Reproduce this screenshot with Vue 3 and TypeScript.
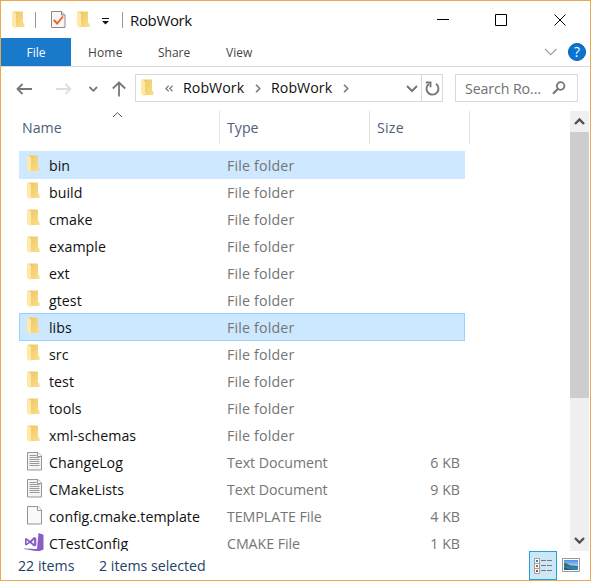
<script setup lang="ts">
type Kind = 'folder' | 'text' | 'blank' | 'vs'
interface Entry {
  name: string
  type: string
  size?: string
  kind: Kind
  state?: 'selected' | 'focused'
}

const folder = (name: string, state?: Entry['state']): Entry => ({ name, type: 'File folder', kind: 'folder', state })

const entries: Entry[] = [
  folder('bin', 'selected'),
  folder('build'),
  folder('cmake'),
  folder('example'),
  folder('ext'),
  folder('gtest'),
  folder('libs', 'focused'),
  folder('src'),
  folder('test'),
  folder('tools'),
  folder('xml-schemas'),
  { name: 'ChangeLog', type: 'Text Document', size: '6 KB', kind: 'text' },
  { name: 'CMakeLists', type: 'Text Document', size: '9 KB', kind: 'text' },
  { name: 'config.cmake.template', type: 'TEMPLATE File', size: '4 KB', kind: 'blank' },
  { name: 'CTestConfig', type: 'CMAKE File', size: '1 KB', kind: 'vs' },
]
</script>

<template>
  <svg class="defs" width="0" height="0" aria-hidden="true">
    <defs>
      <linearGradient id="gold" x1="0" y1="0" x2="1" y2="1">
        <stop offset="0" stop-color="#ecc565" />
        <stop offset="1" stop-color="#fbdf8a" />
      </linearGradient>
      <linearGradient id="sky" x1="0" y1="0" x2="0" y2="1">
        <stop offset="0" stop-color="#4b8fe8" />
        <stop offset="1" stop-color="#e8f6ff" />
      </linearGradient>
      <symbol id="folder" viewBox="0 0 13 18">
        <path d="M1.500 .5h9.500v11.500l1.300 1v3H3z" fill="url(#gold)" />
        <path d="M11 11.500l1.300 1.300V16H9.500z" fill="#fbdc85" />
        <path d="M0 .5h1.500L4 2.700V17.500L0 15z" fill="#ffe9a8" />
      </symbol>
    </defs>
  </svg>
  <div class="window">
    <header class="title">
      <svg class="t-folder"><use href="#folder" /></svg>
      <i class="bar"></i>
      <svg class="t-check" width="16" height="19" viewBox="0 0 16 19">
        <path d="M.5 1.500h10l3.500 3.500V17.500H.5z" fill="#f6f6f7" stroke="#8b8b8b" />
        <path d="M10.500 1.500v3.500h3.500" fill="#ddd" stroke="#8b8b8b" />
        <path d="M2.800 10l3.300 3.500L12 6.500" fill="none" stroke="#f0601f" stroke-width="1.9" />
      </svg>
      <svg class="t-folder two"><use href="#folder" /></svg>
      <svg class="t-more" width="7" height="7" viewBox="0 0 7 7"><path d="M0 .5h7" stroke="#111" /><path d="M0 3h7L3.500 6.500z" fill="#111" /></svg>
      <i class="bar second"></i>
      <h1>RobWork</h1>
      <svg class="controls" width="130" height="14" viewBox="0 0 130 14" fill="none" stroke="#000">
        <path d="M0 6.500h12" />
        <path d="M58.500 1.500h11v11h-11z" />
        <path d="M117.500 1.500l11 11m0-11l-11 11" />
      </svg>
    </header>
    <nav class="tabs">
      <span class="file">File</span>
      <span class="home">Home</span>
      <span class="share">Share</span>
      <span class="view">View</span>
      <svg class="collapse" width="14" height="8" viewBox="0 0 14 8"><path d="M1 1l5.700 5.700L12.400 1" fill="none" stroke="#a0a0a0" stroke-width="1.2" /></svg>
      <b class="help">?</b>
    </nav>
    <div class="address-row">
      <svg class="arrows" width="112" height="18" viewBox="0 0 112 18" fill="none" stroke="#777" stroke-width="1.8">
        <path d="M1.500 9H16M6.500 4L1.500 9l5 5" />
        <path d="M40 9h14.500M49.500 4l5 5-5 5" stroke="#dedede" />
        <path d="M73.500 7l3.800 3.800L81.100 7" />
        <path d="M103 16.500V3M96.800 8.500L103 2.500l6.200 6" />
      </svg>
      <div class="path">
        <svg class="p-folder"><use href="#folder" /></svg>
        <svg class="skip" width="8" height="7" viewBox="0 0 8 7"><path d="M3.700.7L1 3.500l2.700 2.800M7.500.7L4.800 3.500l2.700 2.800" fill="none" stroke="#777" stroke-width="1.2" /></svg>
        <span class="crumb">RobWork</span>
        <svg class="sep" width="6" height="9" viewBox="0 0 6 9"><path d="M1 .8l3.700 3.700L1 8.200" fill="none" stroke="#777" stroke-width="1.6" /></svg>
        <span class="crumb">RobWork</span>
        <svg class="sep" width="6" height="9" viewBox="0 0 6 9"><path d="M1 .8l3.700 3.700L1 8.200" fill="none" stroke="#777" stroke-width="1.6" /></svg>
        <svg class="drop" width="12" height="8" viewBox="0 0 12 8"><path d="M1 1l5 5 5-5" fill="none" stroke="#777" stroke-width="2" /></svg>
        <span class="refresh">
          <svg width="15" height="15" viewBox="0 0 15 15" fill="none" stroke="#777" stroke-width="1.900"><path d="M3.800 2.900A6 6 0 1 0 11 2.800" /><path d="M.8 1.500h4.700v4.800" /></svg>
        </span>
      </div>
      <div class="search">
        <span>Search Ro...</span>
        <svg width="14" height="14" viewBox="0 0 14 14" fill="none" stroke="#777"><circle cx="8.600" cy="5" r="3.800" stroke-width="1.800" /><path d="M5.800 8L1 12.700" stroke-width="2.200" /></svg>
      </div>
    </div>
    <main>
      <section class="listing">
        <div class="heads">
          <span class="h-name">Name</span>
          <span class="h-type">Type</span>
          <span class="h-size">Size</span>
          <svg class="sort" width="11" height="6" viewBox="0 0 11 6"><path d="M1 5l4.500-4.300L10 5" fill="none" stroke="#555" /></svg>
        </div>
        <div class="rows">
          <div v-for="e in entries" :key="e.name" class="row" :class="e.state">
            <span class="icon">
              <svg v-if="e.kind === 'folder'" class="r-folder"><use href="#folder" /></svg>
              <svg v-else-if="e.kind === 'vs'" class="vs" width="20" height="19" viewBox="0 0 20 19">
                <path d="M14.500 0l5 1.800v14.700L14.500 18.500 0 16v-.6l13 .6z" fill="#865fc5" />
                <path fill-rule="evenodd" d="M1 5.500L2.300 5l3.700 2.800L10 4l2.300 1v7.500L10 13.500 6 9.900l-3.700 2.700L1 12zM2.600 7.200v3.400l1.900-1.700zM7.700 8.900l2.400 2V6.800z" fill="#865fc5" />
              </svg>
              <svg v-else class="doc" width="16" height="19" viewBox="0 0 16 19">
                <path d="M.5.500h10.500l3.500 3.500v14H.500z" :fill="e.kind === 'text' ? '#f4f4f4' : '#f8f9f9'" stroke="#959595" />
                <path d="M10.500.500V4.500h4" fill="#fff" stroke="#959595" />
                <path v-if="e.kind === 'text'" d="M2.500 3.500h7M2.500 5.500h10M2.500 7.500h10M2.500 9.500h10M2.500 11.500h10M2.500 13.500h10" stroke="#9a9a9a" />
              </svg>
            </span>
            <span class="name">{{ e.name }}</span>
            <span class="type" :class="{ wide: e.kind === 'folder' }">{{ e.type }}</span>
            <span class="size">{{ e.size }}</span>
          </div>
        </div>
      </section>
      <aside class="scroll">
        <span class="btn"><svg width="11" height="9" viewBox="0 0 11 9"><path d="M1 7l4.500-4.500L10 7" fill="none" stroke="#505050" stroke-width="2.300" /></svg></span>
        <span class="thumb"></span>
        <span class="btn down"><svg width="11" height="9" viewBox="0 0 11 9"><path d="M1 2l4.500 4.500L10 2" fill="none" stroke="#505050" stroke-width="2.300" /></svg></span>
      </aside>
    </main>
    <footer>
      <span class="count">22 items</span>
      <span class="chosen">2 items selected</span>
      <span class="details">
        <svg width="18" height="16" viewBox="0 0 18 16">
          <path d="M.5.500h5v15h-5zM.5 5.500h5M.5 10.500h5" fill="#fff" stroke="#a0a0a0" />
          <path d="M2 2h2v2H2z" fill="#3478c8" /><path d="M2 7h2v2H2z" fill="#7c7b35" /><path d="M2 12h2v2H2z" fill="#d03820" />
          <path d="M7 2.500h5m1 0h5M7 7.500h5m1 0h5M7 12.500h5m1 0h5" stroke="#777" />
        </svg>
      </span>
      <svg class="picture" width="18" height="14" viewBox="0 0 18 14">
        <path d="M.5.500h17v13H.5z" fill="#fff" stroke="#999" />
        <path d="M2 2h14v10H2z" fill="url(#sky)" />
        <path d="M2 5c3-.5 4 2 7 2.500l7 .5v1H2z" fill="#377361" />
        <path d="M2 8.500h14V12H2z" fill="#337fae" /><path d="M2 10c3 0 7 1 9 2H2z" fill="#245f6a" />
      </svg>
    </footer>
  </div>
</template>

<style>
body { margin: 0; background: #fff; overflow: hidden; }
</style>

<style scoped>
* { box-sizing: border-box; }
svg { display: block; flex: none; }
span { white-space: nowrap; }
.defs { position: absolute; }
.window { width: 591px; height: 581px; border: 1px solid #eaa850; background: #fff; display: flex; flex-direction: column; overflow: hidden; font: 14.2px/20px "Open Sans", "Noto Sans", sans-serif; color: #111; }
.title { height: 37px; display: flex; align-items: center; padding-left: 11px; flex: none; }
.t-folder { width: 13px; height: 18px; }
.bar { width: 1px; height: 16px; background: #999; margin-left: 10px; }
.t-check { margin-left: 15px; }
.two { margin-left: 10px; }
.t-more { margin: 3px 0 0 12px; }
.second { margin-left: 13px; }
h1 { font-weight: 400; font-size: 15px; line-height: 20px; margin: 0 0 0 7px; letter-spacing: -.35px; width: 64px; }
.controls { margin-left: 243px; }
.tabs { height: 29px; flex: none; border-bottom: 1px solid #dadada; display: flex; align-items: center; font-size: 12px; color: #444; }
.tabs > span { height: 28px; line-height: 29px; }
.file { width: 70px; background: #1979ca; color: #fff; text-align: center; }
.home { width: 70px; padding-left: 17px; letter-spacing: .15px; }
.share { width: 68px; padding-left: 17px; }
.view { width: 335px; padding-left: 17px; }
.help { width: 18px; height: 18px; border-radius: 50%; background: #0873d1; border: 1px solid #075fae; color: #fff; font-weight: 400; font-size: 14px; line-height: 16px; text-align: center; margin-left: 10px; }
.address-row { height: 44px; flex: none; display: flex; align-items: flex-start; padding: 7px 0 0 15px; }
.arrows { margin-top: 6px; }
.path { margin-left: 7px; width: 308px; height: 28px; border: 1px solid #d9d9d9; display: flex; align-items: center; padding-left: 5px; }
.p-folder { width: 13px; height: 18px; margin-top: -1px; }
.skip { margin: 0 10px 0 11px; }
.crumb { width: 62px; letter-spacing: .05px; }
.sep { margin: 0 10px; }
.drop { margin: 2px 3px 0 auto; }
.refresh { width: 21px; height: 26px; border-left: 1px solid #d9d9d9; display: flex; align-items: center; justify-content: center; padding-left: 1px; }
.search { margin-left: 12px; width: 123px; height: 28px; border: 1px solid #d9d9d9; padding: 0 11px 0 9px; display: flex; align-items: center; justify-content: space-between; color: #707070; }
.search span { margin-top: 1px; letter-spacing: -.1px; }
main { height: 440px; flex: none; display: flex; justify-content: space-between; }
.listing { width: 469px; overflow: hidden; }
.heads { height: 40px; display: grid; grid-template-columns: 219px 150px 100px; color: #4c607a; position: relative; }
.heads span { height: 33px; line-height: 34px; border-right: 1px solid #e2e2e2; }
.h-name { padding-left: 21px; }
.h-type, .h-size { padding-left: 7px; }
.h-size { letter-spacing: .25px; }
.sort { position: absolute; left: 111px; top: 1px; }
.row { height: 28px; margin: 0 5px -1px 18px; border: 1px solid transparent; display: grid; grid-template-columns: 29px 178px 140px 1fr; line-height: 27px; color: #757575; }
.selected { background: #cde8ff; border-color: #cde8ff; }
.focused { background: #cce8ff; border-color: #99d1ff; }
.r-folder { width: 13px; height: 18px; margin: 3px 0 0 7px; }
.doc { margin: 3px 0 0 7px; }
.vs { margin: 3px 0 0 4px; }
.name { color: #111; letter-spacing: .04px; }
.type { letter-spacing: -.04px; }
.wide { letter-spacing: .18px; }
.size { text-align: right; padding-right: 4px; }
.scroll { width: 20px; border-right: 1px solid #fff; background: #f0f0f0; display: flex; flex-direction: column; }
.btn { height: 21px; display: flex; align-items: center; justify-content: center; }
.thumb { height: 266px; background: #cdcdcd; }
.down { margin-top: auto; }
footer { height: 29px; display: flex; align-items: flex-start; color: #254166; padding-left: 17px; line-height: 30px; }
.count { width: 69px; height: 28px; }
.chosen { padding-left: 12px; width: 442px; }
.details { width: 28px; height: 29px; border: 1px solid #269fdb; background: #cce8f6; display: flex; align-items: center; justify-content: center; }
.picture { margin: 7px 0 0 5px; }
</style>
